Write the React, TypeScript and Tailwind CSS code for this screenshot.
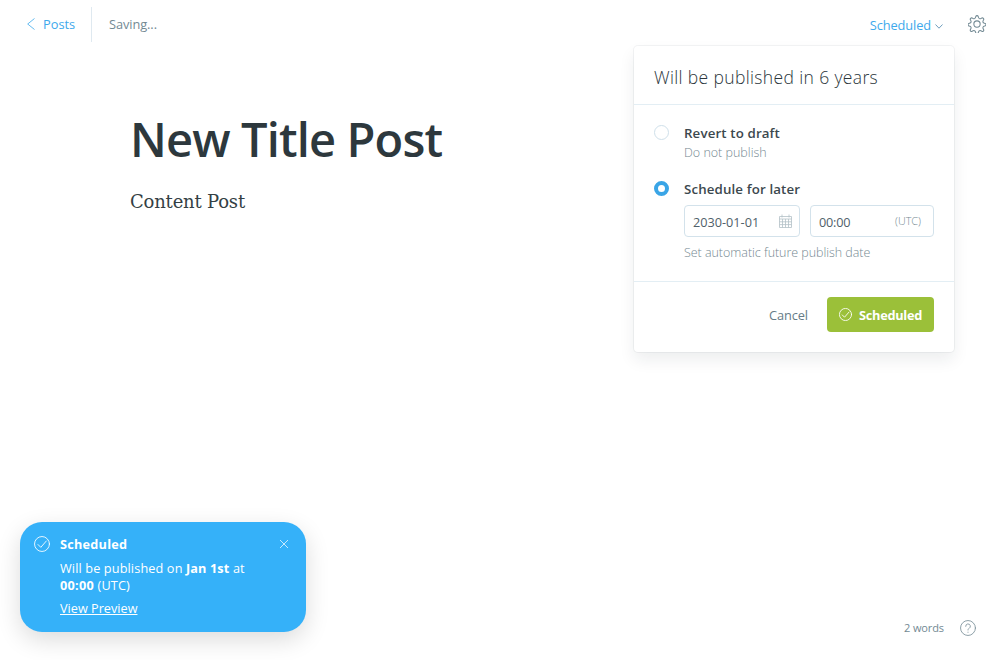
import type { ReactNode } from "react";

function CheckCircle({ className }: { className: string }) {
  return (
    <svg className={className} viewBox="0 0 24 24" fill="none" stroke="currentColor" strokeLinecap="round" strokeLinejoin="round">
      <circle cx="12" cy="12" r="11.2" />
      <path d="M6 12.8l4.2 4.2L18.5 7.5" />
    </svg>
  );
}

function Gear() {
  return (
    <svg className="size-[18px] text-[#738a94]" viewBox="0 0 24 24" fill="none" stroke="currentColor" strokeWidth="1.4" strokeLinecap="round" strokeLinejoin="round">
      <circle cx="12" cy="12" r="4.2" />
      <path d="M13.7 2.1l.45 1.5a2.1 2.1 0 0 0 2.9 1.2l1.4-.7a1.75 1.75 0 0 1 2.35 2.35l-.7 1.4a2.1 2.1 0 0 0 1.2 2.9l1.5.45a1.75 1.75 0 0 1 0 3.3l-1.5.55a2.1 2.1 0 0 0-1.2 2.9l.7 1.4a1.75 1.75 0 0 1-2.35 2.35l-1.4-.7a2.1 2.1 0 0 0-2.9 1.2l-.5 1.5a1.75 1.75 0 0 1-3.3 0l-.5-1.5a2.1 2.1 0 0 0-2.9-1.2l-1.4.7a1.75 1.75 0 0 1-2.35-2.35l.7-1.4a2.1 2.1 0 0 0-1.2-2.9l-1.5-.5a1.75 1.75 0 0 1 0-3.3l1.5-.5a2.1 2.1 0 0 0 1.2-2.9l-.7-1.4a1.75 1.75 0 0 1 2.35-2.35l1.4.7a2.1 2.1 0 0 0 2.9-1.2l.5-1.5a1.75 1.75 0 0 1 3.35 0z" />
    </svg>
  );
}

function Calendar() {
  return (
    <svg className="h-[14px] w-[13px] text-[#b3c0c6]" viewBox="0 0 13 14" fill="none" stroke="currentColor" strokeWidth="0.8">
      <path d="M.5 2.5h12v11H.5zM.5 5h12M.5 7.8h12M.5 10.6h12M3.5 5v8.5M6.5 5v8.5M9.5 5v8.5M3 .5v3M10 .5v3" />
    </svg>
  );
}

function Option({ checked, label, children }: { checked?: boolean; label: string; children: ReactNode }) {
  return (
    <div className="flex">
      <span
        className={
          checked
            ? "mt-[3px] size-[15px] shrink-0 rounded-full border-4 border-[#3aa5e6] bg-white"
            : "mt-[3px] size-[15px] shrink-0 rounded-full border border-[#cfe0ea] bg-white"
        }
      />
      <div className="ml-[15px] flex-1">
        <div className="text-[13.3px] leading-[22px] font-semibold tracking-[0.13px] text-[#3c484e]">{label}</div>
        {children}
      </div>
    </div>
  );
}

function PublishMenu() {
  return (
    <section className="absolute top-[46px] left-[634px] flex h-[306px] w-[320px] flex-col rounded-[4px] bg-white shadow-[0_0_0_1px_rgba(99,114,130,0.08),0_8px_16px_rgba(27,39,51,0.08)]">
      <h2 className="h-[59px] border-b border-[#e3eef4] pl-5 text-[17.5px] leading-[63px] font-light tracking-[0.36px] text-[#2b363b]">
        Will be published in 6 years
      </h2>
      <div className="flex h-[177px] flex-col border-b border-[#e3eef4] px-5 pt-[17px]">
        <div className="h-14">
          <Option label="Revert to draft">
            <p className="text-[12.5px] leading-[17px] font-light text-[#758992]">Do not publish</p>
          </Option>
        </div>
        <Option checked label="Schedule for later">
          <div className="mt-[5px] flex gap-[10px]">
            <div className="flex h-8 w-[116px] items-center justify-between rounded-[4px] border border-[#d3e2eb] pr-[7.5px] pl-2 text-[12.7px] text-[#50606a]">
              <span className="pt-[3px]">2030-01-01</span>
              <Calendar />
            </div>
            <div className="flex h-8 w-[124px] items-center justify-between rounded-[4px] border border-[#d3e2eb] pr-3 pl-2 text-[12.7px] text-[#50606a]">
              <span className="pt-[3px] tracking-[-0.2px]">00:00</span>
              <span className="pt-px text-[10.8px] font-light text-[#758992]">(UTC)</span>
            </div>
          </div>
          <p className="mt-[7px] text-[12.5px] leading-[17px] font-light tracking-[-0.04px] text-[#758992]">Set automatic future publish date</p>
        </Option>
      </div>
      <div className="flex justify-end pt-[15px] pr-5">
        <button className="mr-[19px] h-[35px] pt-[2px] text-[12.8px] tracking-[-0.1px] text-[#667c87]">Cancel</button>
        <button className="flex h-[35px] w-[107px] items-center rounded-[4px] bg-[#9bc039] pl-3 text-[12.8px] font-bold tracking-[-0.3px] text-white">
          <CheckCircle className="mr-[7px] size-[13px] stroke-[1.6]" />
          <span className="pt-[2px]">Scheduled</span>
        </button>
      </div>
    </section>
  );
}

function Toast() {
  return (
    <aside className="absolute top-[522px] left-5 flex h-[110px] w-[286px] rounded-[22px] bg-[#35b1f9] pt-[14px] pl-[14px] text-[12.7px] leading-[17px] whitespace-nowrap text-white shadow-[0_8px_24px_rgba(0,0,0,0.14)]">
      <CheckCircle className="size-4 stroke-[1.3]" />
      <div className="ml-[10px] w-[219px]">
        <div className="font-bold tracking-[0.25px]">Scheduled</div>
        <p className="mt-[7px] tracking-[0.13px]">
          Will be published on <b>Jan 1st</b> at
          <br />
          <b className="tracking-[0.3px]">00:00</b> (UTC)
        </p>
        <a className="mt-[6px] inline-block underline">View Preview</a>
      </div>
      <svg className="mt-[3px] size-[10px] text-white/80" viewBox="0 0 10 10" stroke="currentColor" strokeWidth="0.9">
        <path d="M1 1l8 8M9 1L1 9" />
      </svg>
    </aside>
  );
}

export default function App() {
  return (
    <div className="relative flex h-[660px] w-[1000px] flex-col overflow-hidden bg-white font-['Open_Sans','Noto_Sans',sans-serif]">
      <header className="flex h-12 items-center text-[12.8px]">
        <a className="flex h-[35px] w-[92px] items-center border-r border-[#dfe9f0] pl-[27px] text-[#3ea9ec]">
          <svg className="mr-2 h-3 w-2" viewBox="0 0 8 12" fill="none" stroke="currentColor" strokeWidth="0.8">
            <path d="M7.5.5L.7 6l6.8 5.5" />
          </svg>
          <span className="pt-[2px]">Posts</span>
        </a>
        <span className="ml-[17px] pt-[2px] tracking-[-0.08px] text-[#738a94]">Saving...</span>
        <button className="mt-[3px] ml-auto flex items-center tracking-[-0.1px] text-[#3ea9ec]">
          Scheduled
          <svg className="mt-[2px] ml-1 h-[5px] w-2" viewBox="0 0 8 5" fill="none" stroke="#5f93b5" strokeWidth="0.9">
            <path d="M.5.5L4 4.2 7.5.5" />
          </svg>
        </button>
        <button className="mr-[14px] ml-[25px]">
          <Gear />
        </button>
      </header>
      <main className="flex-1 pt-[59px] pl-[130px]">
        <h1 className="text-[47px] leading-[64px] font-semibold tracking-[-0.85px] text-[#2d383d]">New Title Post</h1>
        <p className="mt-4 font-['DejaVu_Serif',serif] text-[18px] leading-[30px] tracking-[-0.2px] text-[#343f44]">Content Post</p>
      </main>
      <footer className="flex h-16 items-center justify-end pr-6 text-[11px] text-[#738a94]">
        <span className="tracking-[-0.1px]">2 words</span>
        <svg className="ml-4 size-4 text-[#7d929b]" viewBox="0 0 24 24" fill="none" stroke="currentColor" strokeWidth="1.3" strokeLinecap="round">
          <circle cx="12" cy="12" r="11.2" />
          <path d="M8.5 9.5a3.5 3.5 0 1 1 5.2 3c-1.1.7-1.7 1.3-1.7 2.5M12 18.2v.3" />
        </svg>
      </footer>
      <PublishMenu />
      <Toast />
    </div>
  );
}
